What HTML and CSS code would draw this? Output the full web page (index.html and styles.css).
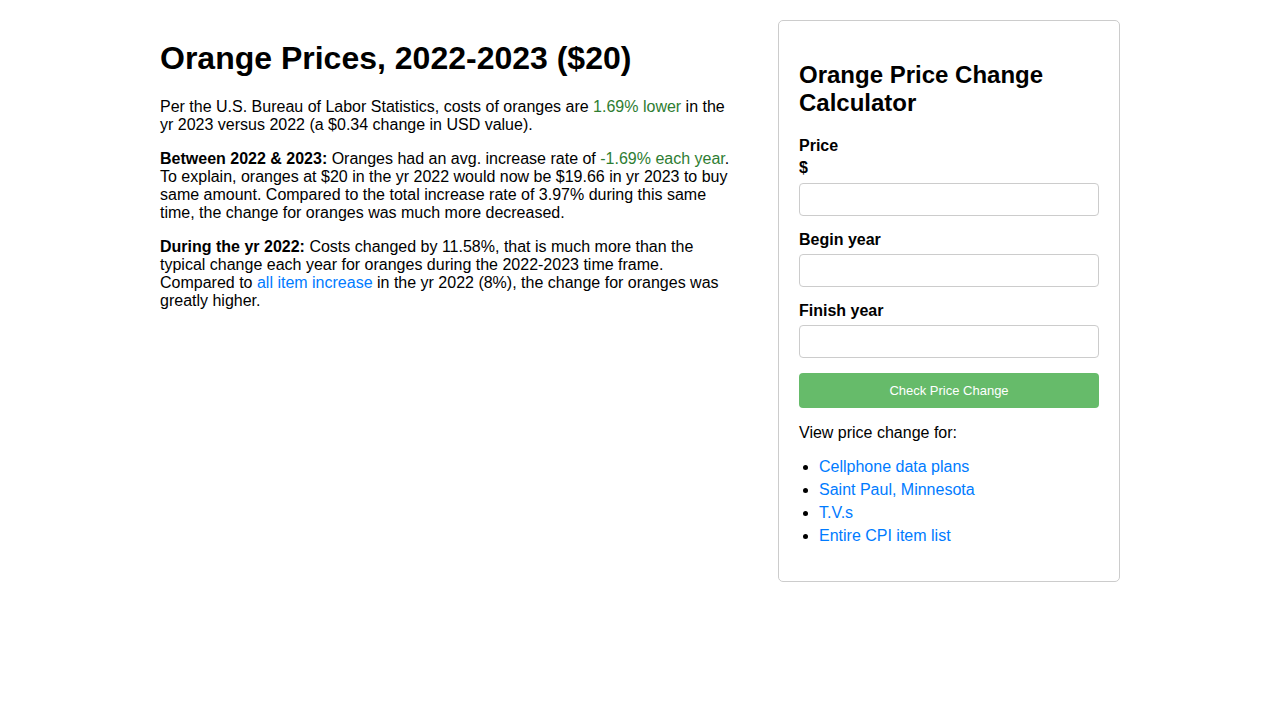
FILE: index.html
```html
<!DOCTYPE html>
<html lang="en">
<head>
<meta charset="utf-8">
<title>Orange Prices, 2022-2023 ($20)</title>
<link rel="stylesheet" href="styles.css">
</head>
<body>
<div class="page">
  <main class="content">
    <h1 class="title">Orange Prices, 2022-2023 ($20)</h1>
    <p class="para">Per the U.S. Bureau of Labor Statistics, costs of oranges are <span class="green">1.69% lower</span> in the yr 2023 versus 2022 (a $0.34 change in USD value).</p>
    <p class="para"><strong>Between 2022 &amp; 2023:</strong> Oranges had an avg. increase rate of <span class="green">-1.69% each year</span>. To explain, oranges at $20 in the yr 2022 would now be $19.66 in yr 2023 to buy same amount. Compared to the total increase rate of 3.97% during this same time, the change for oranges was much more decreased.</p>
    <p class="para"><strong>During the yr 2022:</strong> Costs changed by 11.58%, that is much more than the typical change each year for oranges during the 2022-2023 time frame. Compared to <a class="link" href="#">all item increase</a> in the yr 2022 (8%), the change for oranges was greatly higher.</p>
  </main>
  <aside class="sidebar">
    <h2 class="calc-title">Orange Price Change Calculator</h2>
    <form class="calc-form">
      <label class="field-label">Price</label>
      <span class="currency">$</span>
      <input class="field-input" type="text">
      <label class="field-label">Begin year</label>
      <input class="field-input" type="text">
      <label class="field-label">Finish year</label>
      <input class="field-input" type="text">
      <button class="submit" type="button">Check Price Change</button>
    </form>
    <p class="view-text">View price change for:</p>
    <ul class="link-list">
      <li><a class="link" href="#">Cellphone data plans</a></li>
      <li><a class="link" href="#">Saint Paul, Minnesota</a></li>
      <li><a class="link" href="#">T.V.s</a></li>
      <li><a class="link" href="#">Entire CPI item list</a></li>
    </ul>
  </aside>
</div>
</body>
</html>
```
FILE: styles.css
```css
html, body {
  margin: 0;
  padding: 0;
  background: #fff;
}
body {
  font-family: "Liberation Sans", Arial, sans-serif;
  font-size: 16px;
  line-height: normal;
  color: #000;
}
.page {
  width: 960px;
  margin: 0 auto;
  padding-top: 20px;
  display: flex;
  align-items: flex-start;
  gap: 42px;
}
.content {
  width: 576px;
  flex: none;
}
.title {
  font-size: 32px;
  line-height: 37px;
  font-weight: bold;
  margin: 20px 0 21px;
}
.para {
  margin: 0 0 16px;
}
.green {
  color: #2e7d32;
}
.link {
  color: #007bff;
  text-decoration: none;
}
.sidebar {
  width: 342px;
  flex: none;
  box-sizing: border-box;
  border: 1px solid #ccc;
  border-radius: 5px;
  padding: 20px;
}
.calc-title {
  font-size: 24px;
  line-height: 28px;
  font-weight: bold;
  margin: 20px 0 20px;
}
.calc-form {
  display: flex;
  flex-direction: column;
}
.field-label {
  font-weight: bold;
  display: block;
  margin-top: 15px;
  margin-bottom: 5px;
}
.field-label:first-child {
  margin-top: 0;
  margin-bottom: 4px;
}
.currency {
  font-weight: bold;
  margin-bottom: 6px;
}
.field-input {
  box-sizing: border-box;
  width: 100%;
  height: 33px;
  border: 1px solid #ccc;
  border-radius: 4px;
  padding: 6px 8px;
  font-size: 16px;
  font-family: inherit;
  margin: 0;
}
.submit {
  margin-top: 15px;
  height: 35px;
  width: 100%;
  background: #66bb6a;
  color: #fff;
  border: none;
  border-radius: 4px;
  font-family: "Liberation Sans", Arial, sans-serif;
  font-size: 13px;
}
.view-text {
  margin: 16px 0 13px;
}
.link-list {
  margin: 0 0 14px;
  padding-left: 20px;
  line-height: 23px;
}
```
